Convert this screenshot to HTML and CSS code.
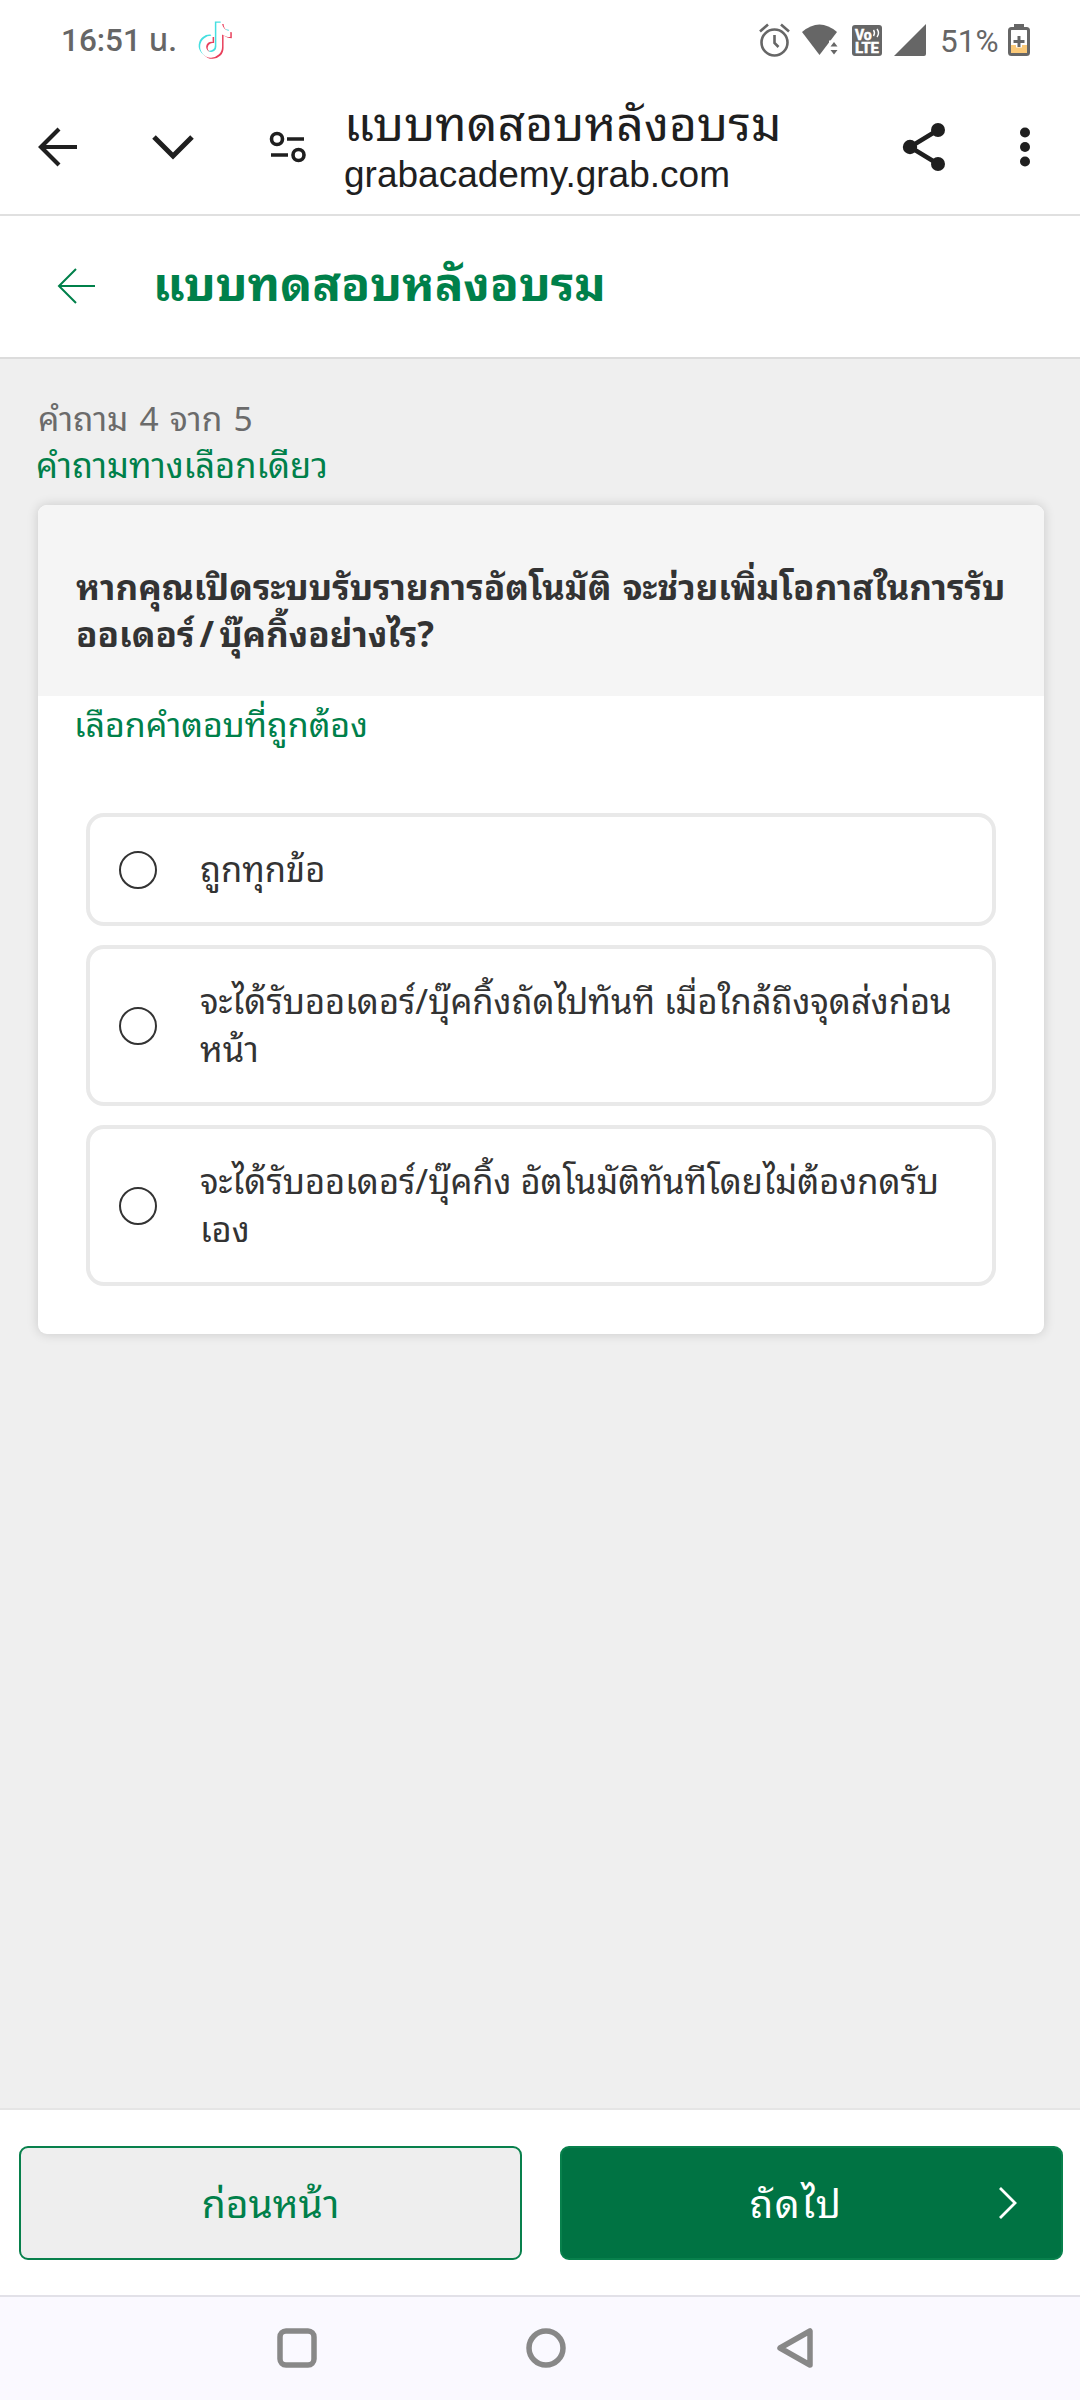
FILE: index.html
```html
<!DOCTYPE html>
<html lang="th">
<head>
<meta charset="utf-8">
<title>แบบทดสอบหลังอบรม</title>
<link rel="stylesheet" href="styles.css">
</head>
<body>
<div class="screen">
  <div class="status">
    <span class="time">16:51 น.</span>
    <svg class="note" width="36" height="38" viewBox="0 0 24 25.300">
      <defs><path id="n" d="M12.500 0h3.800c.2 3 2.200 5.300 5.500 5.500v4c-2 0-4-.6-5.500-1.700v8.200a7.300 7.300 0 1 1-6.300-7.200v4a3.400 3.400 0 1 0 2.500 3.200z"/></defs>
      <use href="#n" x="-.6" y=".3" fill="#45dfe0"/><use href="#n" x="1.400" y="1.900" fill="#e8405c"/><use href="#n" x=".4" y="1.100" fill="#fff"/>
    </svg>
    <div class="indicators">
      <svg class="alarm" width="31" height="34" viewBox="0 0 31 34" fill="none" stroke="#666" stroke-width="2.600"><circle cx="15.500" cy="19.500" r="13"/><path d="M15.500 12v8l4 4M1 8.500 9 1.500M30 8.500l-8-7"/></svg>
      <svg class="wifi" width="36" height="32" viewBox="0 0 36 32" fill="#666"><path d="M0 8Q17.500-7 35 8L17.500 31Z"/><path d="M27 16.500h9V32h-9z" fill="#fff"/><path d="M28.500 22.500l3.500-4.500 3.500 4.500zM28.500 26l3.500 4.500 3.500-4.500z"/></svg>
      <svg class="lte" width="30" height="31" viewBox="0 0 30 31"><rect width="30" height="31" rx="3" fill="#666"/><text class="volte" x="3" y="14.500">Vo</text><text class="volte" x="3" y="28" textLength="24" lengthAdjust="spacingAndGlyphs">LTE</text><path d="M21.500 5q2 3 0 6M25 4q3 4 0 8" stroke="#fff" fill="none" stroke-width="1.400"/></svg>
      <svg class="signal" width="32" height="32" viewBox="0 0 32 32"><path d="M0 32 32 0v30q0 2-2 2z" fill="#666"/></svg>
      <span class="percent">51%</span>
      <svg width="22" height="32" viewBox="0 0 22 32"><path d="M6 0h10v3H6z" fill="#666"/><rect x="1.500" y="4.500" width="19" height="26" rx="2" fill="#fff" stroke="#666" stroke-width="3"/><path d="M3 21h16v8H3z" fill="#fbc978"/><path d="M11 10.500v13M4.500 17h13" stroke="#fff" stroke-width="6"/><path d="M11 12v11M5.500 17.500h11" stroke="#666" stroke-width="3"/></svg>
    </div>
  </div>
  <div class="toolbar">
    <svg class="t-back" width="40" height="40" viewBox="0 0 40 40" fill="none" stroke="#1f1f1f" stroke-width="4.200"><path d="M39 20H4M21 2 3 20l18 18"/></svg>
    <svg class="t-down" width="44" height="28" viewBox="0 0 44 28" fill="none" stroke="#1f1f1f" stroke-width="5"><path d="m3 4 19 19L41 4"/></svg>
    <svg class="t-tune" width="38" height="34" viewBox="0 0 38 34" fill="none" stroke="#1f1f1f" stroke-width="3.600"><circle cx="8" cy="9" r="5.500"/><circle cx="29.500" cy="25" r="5.500"/><path d="M18 9h17M2 25h17"/></svg>
    <div class="page-id"><div class="page-title">แบบทดสอบหลังอบรม</div><div class="page-url">grabacademy.grab.com</div></div>
    <svg class="t-share" width="44" height="50" viewBox="0 0 44 50"><path d="M36 8 8 25l28 17" fill="none" stroke="#1f1f1f" stroke-width="4.500"/><g fill="#1f1f1f"><circle cx="36" cy="8" r="7"/><circle cx="8" cy="25" r="7.200"/><circle cx="36" cy="42" r="7"/></g></svg>
    <svg class="t-more" width="12" height="42" viewBox="0 0 12 42" fill="#1f1f1f"><circle cx="6" cy="6.500" r="5"/><circle cx="6" cy="21" r="5"/><circle cx="6" cy="35.500" r="5"/></svg>
  </div>
  <header class="quiz-header">
    <svg width="40" height="38" viewBox="0 0 40 38" fill="none" stroke="#00804a" stroke-width="2"><path d="M38 19H2M19 2 2 19l17 17"/></svg>
    <h1>แบบทดสอบหลังอบรม</h1>
  </header>
  <main>
    <p class="counter">คำถาม 4 จาก 5</p>
    <p class="kind">คำถามทางเลือกเดียว</p>
    <section class="card">
      <h2>หากคุณเปิดระบบรับรายการอัตโนมัติ จะช่วยเพิ่มโอกาสในการรับ<br><span class="second">ออเดอร์ / บุ๊คกิ้งอย่างไร?</span></h2>
      <p class="hint">เลือกคำตอบที่ถูกต้อง</p>
      <div class="options">
        <div class="option"><i class="radio"></i><span>ถูกทุกข้อ</span></div>
        <div class="option tall"><i class="radio"></i><span>จะได้รับออเดอร์/บุ๊คกิ้งถัดไปทันที เมื่อใกล้ถึงจุดส่งก่อน<br>หน้า</span></div>
        <div class="option tall"><i class="radio"></i><span>จะได้รับออเดอร์/บุ๊คกิ้ง อัตโนมัติทันทีโดยไม่ต้องกดรับ<br>เอง</span></div>
      </div>
    </section>
  </main>
  <footer class="actions">
    <div class="btn prev"><span>ก่อนหน้า</span></div>
    <div class="btn next"><span>ถัดไป</span><svg width="20" height="34" viewBox="0 0 20 34" fill="none" stroke="#fff" stroke-width="2.800"><path d="m2 2 15 15L2 32"/></svg></div>
  </footer>
  <nav class="sysnav">
    <svg width="40" height="40" viewBox="0 0 40 40"><rect x="3" y="3" width="34" height="34" rx="6"/></svg>
    <svg width="40" height="40" viewBox="0 0 40 40"><circle cx="20" cy="20" r="17"/></svg>
    <svg width="40" height="40" viewBox="0 0 40 40"><path d="M35 3v34L5 20Z" stroke-linejoin="round"/></svg>
  </nav>
</div>
</body>
</html>
```
FILE: styles.css
```css
* { box-sizing: border-box; margin: 0; padding: 0; }
body { width: 1080px; background: #fff; font-family: "Noto Sans", "Noto Sans Thai Looped", "Noto Looped Thai", "Noto Sans Thai", sans-serif; color: #333; }
svg { display: block; flex: none; }
.screen { width: 1080px; height: 2400px; display: flex; flex-direction: column; overflow: hidden; white-space: nowrap; }
.status { height: 80px; padding: 0 50px 0 61px; display: flex; align-items: center; font-family: Roboto, "Noto Sans Thai", sans-serif; font-size: 32px; color: #666; }
.time { width: 136px; padding-top: 2px; font-size: 31.5px; font-weight: 500; }
.note { overflow: visible; }
.indicators { margin-left: auto; display: flex; align-items: center; }
.alarm { margin-right: 12px; }
.wifi { margin-right: 14px; }
.lte { margin-right: 12px; }
.signal { margin-right: 14px; }
.percent { width: 58px; margin-right: 10px; padding-top: 2px; font-size: 31.500px; }
.volte { font: 700 14px Roboto, sans-serif; fill: #fff; stroke: #fff; stroke-width: .5; }
.toolbar { height: 136px; border-bottom: 2px solid #e0e0e0; padding: 0 49px 0 38px; display: flex; align-items: center; }
.t-down { margin-left: 73px; }
.t-tune { margin-left: 74px; }
.page-id { margin-left: 37px; flex: 1; color: #1f1f1f; }
.page-title { font-size: 48px; line-height: 56px; letter-spacing: .1px; }
.page-url { font: 37px/48px "Liberation Sans", sans-serif; }
.t-share { margin-right: 73px; }
.quiz-header { height: 143px; border-bottom: 2px solid #dcdcdc; padding: 0 0 2px 57px; display: flex; align-items: center; gap: 56px; }
.quiz-header h1 { font-size: 47.5px; line-height: 60px; padding-bottom: 6px; color: #00804a; }
main { flex: 1; background: #efefef; padding: 35px 36px 0 38px; }
.counter { font-size: 33.500px; line-height: 48px; color: #6b6b6b; word-spacing: 2.500px; }
.kind { font-size: 34.500px; line-height: 45px; color: #00804a; margin-left: -2px; }
.card { margin-top: 18px; height: 829px; background: #fff; border-radius: 9px; box-shadow: 0 0 12px rgba(0,0,0,.16); overflow: hidden; }
.card h2 { height: 191px; padding: 58px 0 0 38px; background: #f5f5f5; font-size: 35px; line-height: 47px; word-spacing: 2px; }
.second { word-spacing: -4px; }
.hint { height: 117px; padding: 4px 0 0 36px; color: #00804a; font-size: 34px; line-height: 48px; }
.options { margin: 0 48px; display: flex; flex-direction: column; gap: 19px; }
.option { height: 113px; border: 4px solid #e9e9e9; border-radius: 18px; display: flex; align-items: center; padding-left: 29px; gap: 43px; font-size: 34.500px; line-height: 48px; }
.option span { padding-bottom: 2px; }
.tall { height: 161px; }
.radio { width: 38px; height: 38px; border: 2px solid #333; border-radius: 50%; flex: none; }
.actions { height: 187px; border-top: 2px solid #e5e5e5; padding: 36px 17px 0 19px; display: flex; gap: 38px; }
.btn { width: 503px; height: 114px; border: 2px solid #08804c; border-radius: 9px; display: flex; align-items: center; justify-content: center; font-size: 39px; }
.btn span { padding-bottom: 5px; }
.prev { background: #eee; color: #00804a; }
.next { background: #007343; color: #fff; padding: 0 43px 0 32px; }
.next span { flex: 1; text-align: center; letter-spacing: 1.500px; }
.sysnav { height: 105px; border-top: 2px solid #e2e1e8; background: #faf9ff; padding: 0 0 2px 11px; display: flex; align-items: center; justify-content: center; gap: 209px; fill: none; stroke: #888; stroke-width: 5.500; }
```
